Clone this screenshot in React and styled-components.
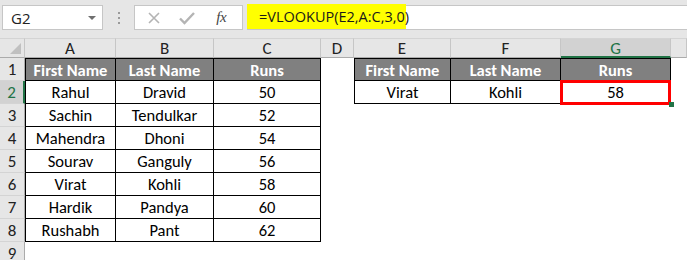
import React from "react";
import styled, { createGlobalStyle, css } from "styled-components";

const GlobalStyle = createGlobalStyle`
  html, body { margin: 0; padding: 0; background: #ffffff; overflow: hidden; }
  * { box-sizing: border-box; }
`;

const Page = styled.div`
  width: 687px;
  height: 260px;
  display: flex;
  flex-direction: column;
  background: #ffffff;
  overflow: hidden;
`;

const TopBar = styled.div`
  flex: 0 0 38px;
  height: 38px;
  background: #e6e6e6;
  display: flex;
  align-items: flex-start;
  padding-top: 5px;
  padding-left: 2px;
`;

const NameBox = styled.div`
  width: 101px;
  height: 25px;
  background: #fff;
  border: 1px solid #c6c6c6;
  display: flex;
  align-items: center;
  justify-content: space-between;
  padding: 0 6px 0 8px;
  font-family: "Open Sans", "Noto Sans", sans-serif;
  font-size: 15px;
  color: #222;
`;

const Caret = styled.span`
  width: 0;
  height: 0;
  border-left: 4px solid transparent;
  border-right: 4px solid transparent;
  border-top: 4px solid #6f6f6f;
`;

const Grip = styled.div`
  width: 31px;
  height: 25px;
  display: flex;
  flex-direction: column;
  align-items: center;
  justify-content: center;
  gap: 3px;
`;

const GripDot = styled.span`
  width: 2px;
  height: 2px;
  background: #9a9a9a;
`;

const FxButtons = styled.div`
  width: 109px;
  height: 25px;
  background: #fff;
  border: 1px solid #c6c6c6;
  display: grid;
  grid-template-columns: 1fr 1fr 1fr;
  align-items: center;
  justify-items: center;
  padding: 0 4px 0 2px;
`;

const FxLabel = styled.span`
  font-family: "Liberation Serif", "DejaVu Serif", serif;
  font-style: italic;
  font-size: 15px;
  color: #444;
  letter-spacing: -0.5px;
`;

const FormulaBox = styled.div`
  flex: 1;
  height: 25px;
  margin-left: 4px;
  background: #fff;
  border-top: 1px solid #c6c6c6;
  border-bottom: 1px solid #c6c6c6;
  display: flex;
  align-items: stretch;
`;

const Highlight = styled.div`
  width: 159px;
  margin-top: -2px;
  background: #ffff00;
  display: flex;
  align-items: center;
  padding-left: 12px;
  font-family: "Open Sans", "Noto Sans", sans-serif;
  font-size: 14.5px;
  color: #1a1a1a;
  white-space: nowrap;
`;

const Sheet = styled.div`
  flex: 0 0 auto;
  display: grid;
  grid-template-columns: 25px 91px 98px 107px 33px 97px 110px 110px 1fr;
  grid-template-rows: 20px repeat(9, 23px);
  font-family: "Carlito", "Lato", sans-serif;
  font-size: 16.5px;
  color: #000;
`;

const Corner = styled.div`
  background: #e6e6e6;
  border-top: 1px solid #d4d4d4;
  border-right: 1px solid #c6c6c6;
  border-bottom: 1px solid #ababab;
  position: relative;
  &::after {
    content: "";
    position: absolute;
    right: 3px;
    bottom: 3px;
    width: 0;
    height: 0;
    border-left: 11px solid transparent;
    border-bottom: 11px solid #c0c0c0;
  }
`;

const ColHead = styled.div`
  background: ${(p) => (p.$active ? "#d2d2d2" : "#e6e6e6")};
  color: ${(p) => (p.$active ? "#217346" : "#222")};
  border-top: 1px solid #d4d4d4;
  border-right: 1px solid #c6c6c6;
  border-bottom: ${(p) => (p.$active ? "2px solid #217346" : "1px solid #ababab")};
  display: flex;
  align-items: center;
  justify-content: center;
  padding-top: 1px;
  font-size: 17px;
`;

const RowHead = styled.div`
  background: ${(p) => (p.$active ? "#d2d2d2" : "#e6e6e6")};
  color: ${(p) => (p.$active ? "#217346" : "#222")};
  border-bottom: 1px solid #d4d4d4;
  border-right: ${(p) => (p.$active ? "2px solid #217346" : "1px solid #ababab")};
  display: flex;
  align-items: center;
  justify-content: center;
  font-size: 17px;
`;

const Cell = styled.div`
  display: flex;
  align-items: center;
  justify-content: center;
  position: relative;
  white-space: nowrap;
  ${(p) =>
    p.$boxed &&
    css`
      border-right: 1px solid #000;
      border-bottom: 1px solid #000;
    `}
  ${(p) => p.$firstCol && css`border-left: 1px solid #000;`}
  ${(p) => p.$firstRow && css`border-top: 1px solid #000;`}
  ${(p) =>
    p.$head &&
    css`
      background: #808080;
      color: #fff;
      font-weight: 700;
    `}
  ${(p) =>
    p.$marked &&
    css`
      &::after {
        content: "";
        position: absolute;
        left: -1px;
        top: -1px;
        right: -1px;
        bottom: -2px;
        border: 3px solid #ff0000;
      }
      &::before {
        content: "";
        position: absolute;
        right: -4px;
        bottom: -4px;
        width: 5px;
        height: 5px;
        background: #217346;
        z-index: 1;
      }
    `}
`;

const cols = ["A", "B", "C", "D", "E", "F", "G"];

const left = [
  ["First Name", "Last Name", "Runs"],
  ["Rahul", "Dravid", "50"],
  ["Sachin", "Tendulkar", "52"],
  ["Mahendra", "Dhoni", "54"],
  ["Sourav", "Ganguly", "56"],
  ["Virat", "Kohli", "58"],
  ["Hardik", "Pandya", "60"],
  ["Rushabh", "Pant", "62"],
];

const right = [
  ["First Name", "Last Name", "Runs"],
  ["Virat", "Kohli", "58"],
];

function Check() {
  return (
    <svg width="18" height="14" viewBox="0 0 18 14">
      <path d="M2 7.5 L6.5 12 L16 2" fill="none" stroke="#b4b4b4" strokeWidth="2.4" />
    </svg>
  );
}

function Cross() {
  return (
    <svg width="14" height="14" viewBox="0 0 14 14">
      <path d="M2 2 L12 12 M12 2 L2 12" fill="none" stroke="#b4b4b4" strokeWidth="1.6" />
    </svg>
  );
}

export default function App() {
  const rows = [];
  for (let r = 0; r < 9; r++) {
    const rowNum = r + 1;
    rows.push(
      <RowHead key={`h${r}`} $active={rowNum === 2}>
        {rowNum}
      </RowHead>
    );
    for (let c = 0; c < 8; c++) {
      let content = null;
      let props = {};
      if (c < 3 && r < left.length) {
        content = left[r][c];
        props = { $boxed: true, $firstCol: c === 0, $firstRow: r === 0, $head: r === 0 };
      } else if (c >= 4 && c < 7 && r < right.length) {
        content = right[r][c - 4];
        props = {
          $boxed: true,
          $firstCol: c === 4,
          $firstRow: r === 0,
          $head: r === 0,
          $marked: c === 6 && r === 1,
        };
      }
      rows.push(
        <Cell key={`${r}-${c}`} {...props}>
          {content}
        </Cell>
      );
    }
  }

  return (
    <Page>
      <GlobalStyle />
      <TopBar>
        <NameBox>
          G2
          <Caret />
        </NameBox>
        <Grip>
          <GripDot />
          <GripDot />
          <GripDot />
        </Grip>
        <FxButtons>
          <Cross />
          <Check />
          <FxLabel>fx</FxLabel>
        </FxButtons>
        <FormulaBox>
          <Highlight>=VLOOKUP(E2,A:C,3,0)</Highlight>
        </FormulaBox>
      </TopBar>
      <Sheet>
        <Corner />
        {cols.map((c) => (
          <ColHead key={c} $active={c === "G"}>
            {c}
          </ColHead>
        ))}
        <ColHead />
        {rows}
      </Sheet>
    </Page>
  );
}
